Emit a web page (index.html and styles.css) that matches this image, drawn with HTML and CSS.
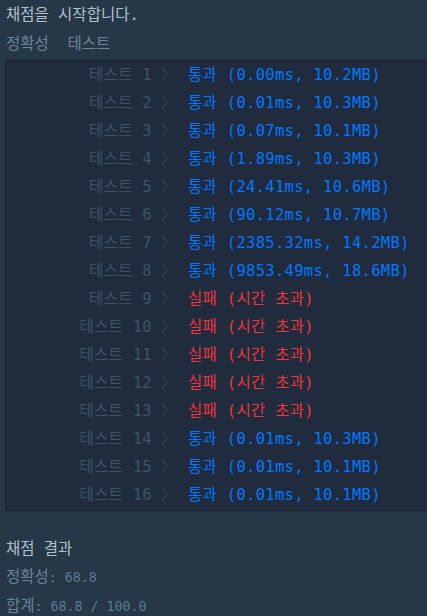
FILE: index.html
```html
<!DOCTYPE html>
<html>
<head>
    <title>채점 결과</title>
    <meta charset="UTF-8">
    <link rel="stylesheet" href="styles.css">
</head>
<body>
    <div class="console">
        <div class="line head">채점을 시작합니다.</div>
        <div class="line sub">정확성  테스트</div>

        <!-- 테스트 케이스 결과 -->
        <div class="result-box">
            <div class="row"><span class="name">테스트 1</span><span class="sep">〉</span><span class="pass">통과 (0.00ms, 10.2MB)</span></div>
            <div class="row"><span class="name">테스트 2</span><span class="sep">〉</span><span class="pass">통과 (0.01ms, 10.3MB)</span></div>
            <div class="row"><span class="name">테스트 3</span><span class="sep">〉</span><span class="pass">통과 (0.07ms, 10.1MB)</span></div>
            <div class="row"><span class="name">테스트 4</span><span class="sep">〉</span><span class="pass">통과 (1.89ms, 10.3MB)</span></div>
            <div class="row"><span class="name">테스트 5</span><span class="sep">〉</span><span class="pass">통과 (24.41ms, 10.6MB)</span></div>
            <div class="row"><span class="name">테스트 6</span><span class="sep">〉</span><span class="pass">통과 (90.12ms, 10.7MB)</span></div>
            <div class="row"><span class="name">테스트 7</span><span class="sep">〉</span><span class="pass">통과 (2385.32ms, 14.2MB)</span></div>
            <div class="row"><span class="name">테스트 8</span><span class="sep">〉</span><span class="pass">통과 (9853.49ms, 18.6MB)</span></div>
            <div class="row"><span class="name">테스트 9</span><span class="sep">〉</span><span class="fail">실패 (시간 초과)</span></div>
            <div class="row"><span class="name">테스트 10</span><span class="sep">〉</span><span class="fail">실패 (시간 초과)</span></div>
            <div class="row"><span class="name">테스트 11</span><span class="sep">〉</span><span class="fail">실패 (시간 초과)</span></div>
            <div class="row"><span class="name">테스트 12</span><span class="sep">〉</span><span class="fail">실패 (시간 초과)</span></div>
            <div class="row"><span class="name">테스트 13</span><span class="sep">〉</span><span class="fail">실패 (시간 초과)</span></div>
            <div class="row"><span class="name">테스트 14</span><span class="sep">〉</span><span class="pass">통과 (0.01ms, 10.3MB)</span></div>
            <div class="row"><span class="name">테스트 15</span><span class="sep">〉</span><span class="pass">통과 (0.01ms, 10.1MB)</span></div>
            <div class="row"><span class="name">테스트 16</span><span class="sep">〉</span><span class="pass">통과 (0.01ms, 10.1MB)</span></div>
        </div>

        <div class="line head summary">채점 결과</div>
        <div class="line sub">정확성<span class="score">: 68.8</span></div>
        <div class="line sub">합계<span class="score">: 68.8 / 100.0</span></div>
    </div>
</body>
</html>
```

FILE: styles.css
```css
body {
    margin: 0;
    padding: 0;
    background: #263747;
    overflow: hidden;
}

.console {
    padding: 1px 0 0 6px;
    font-family: "DejaVu Sans Mono", "Noto Sans CJK KR", monospace;
    font-size: 15.5px;
}

.line {
    height: 29px;
    line-height: 28px;
    white-space: pre;
}

.head {
    color: #b2c0cc;
}

.sub {
    color: #6b8499;
}

.score {
    font-size: 13.3px;
    color: #5a7a98;
}

.summary {
    margin-top: 24px;
    height: 28px;
}

/* 결과 박스 */
.result-box {
    margin: 1px 0 0 -1px;
    background: #202b3d;
    border: 1px solid #172233;
    border-right: none;
    padding-bottom: 1px;
}

.row {
    display: flex;
    height: 28px;
    line-height: 28px;
    white-space: pre;
    letter-spacing: 0.3px;
}

.name {
    width: 146px;
    text-align: right;
    color: #3f5268;
}

.sep {
    margin-left: 9px;
    width: 27px;
    color: #35465a;
}

.pass {
    color: #0078ff;
}

.fail {
    color: #f0353c;
}
```
